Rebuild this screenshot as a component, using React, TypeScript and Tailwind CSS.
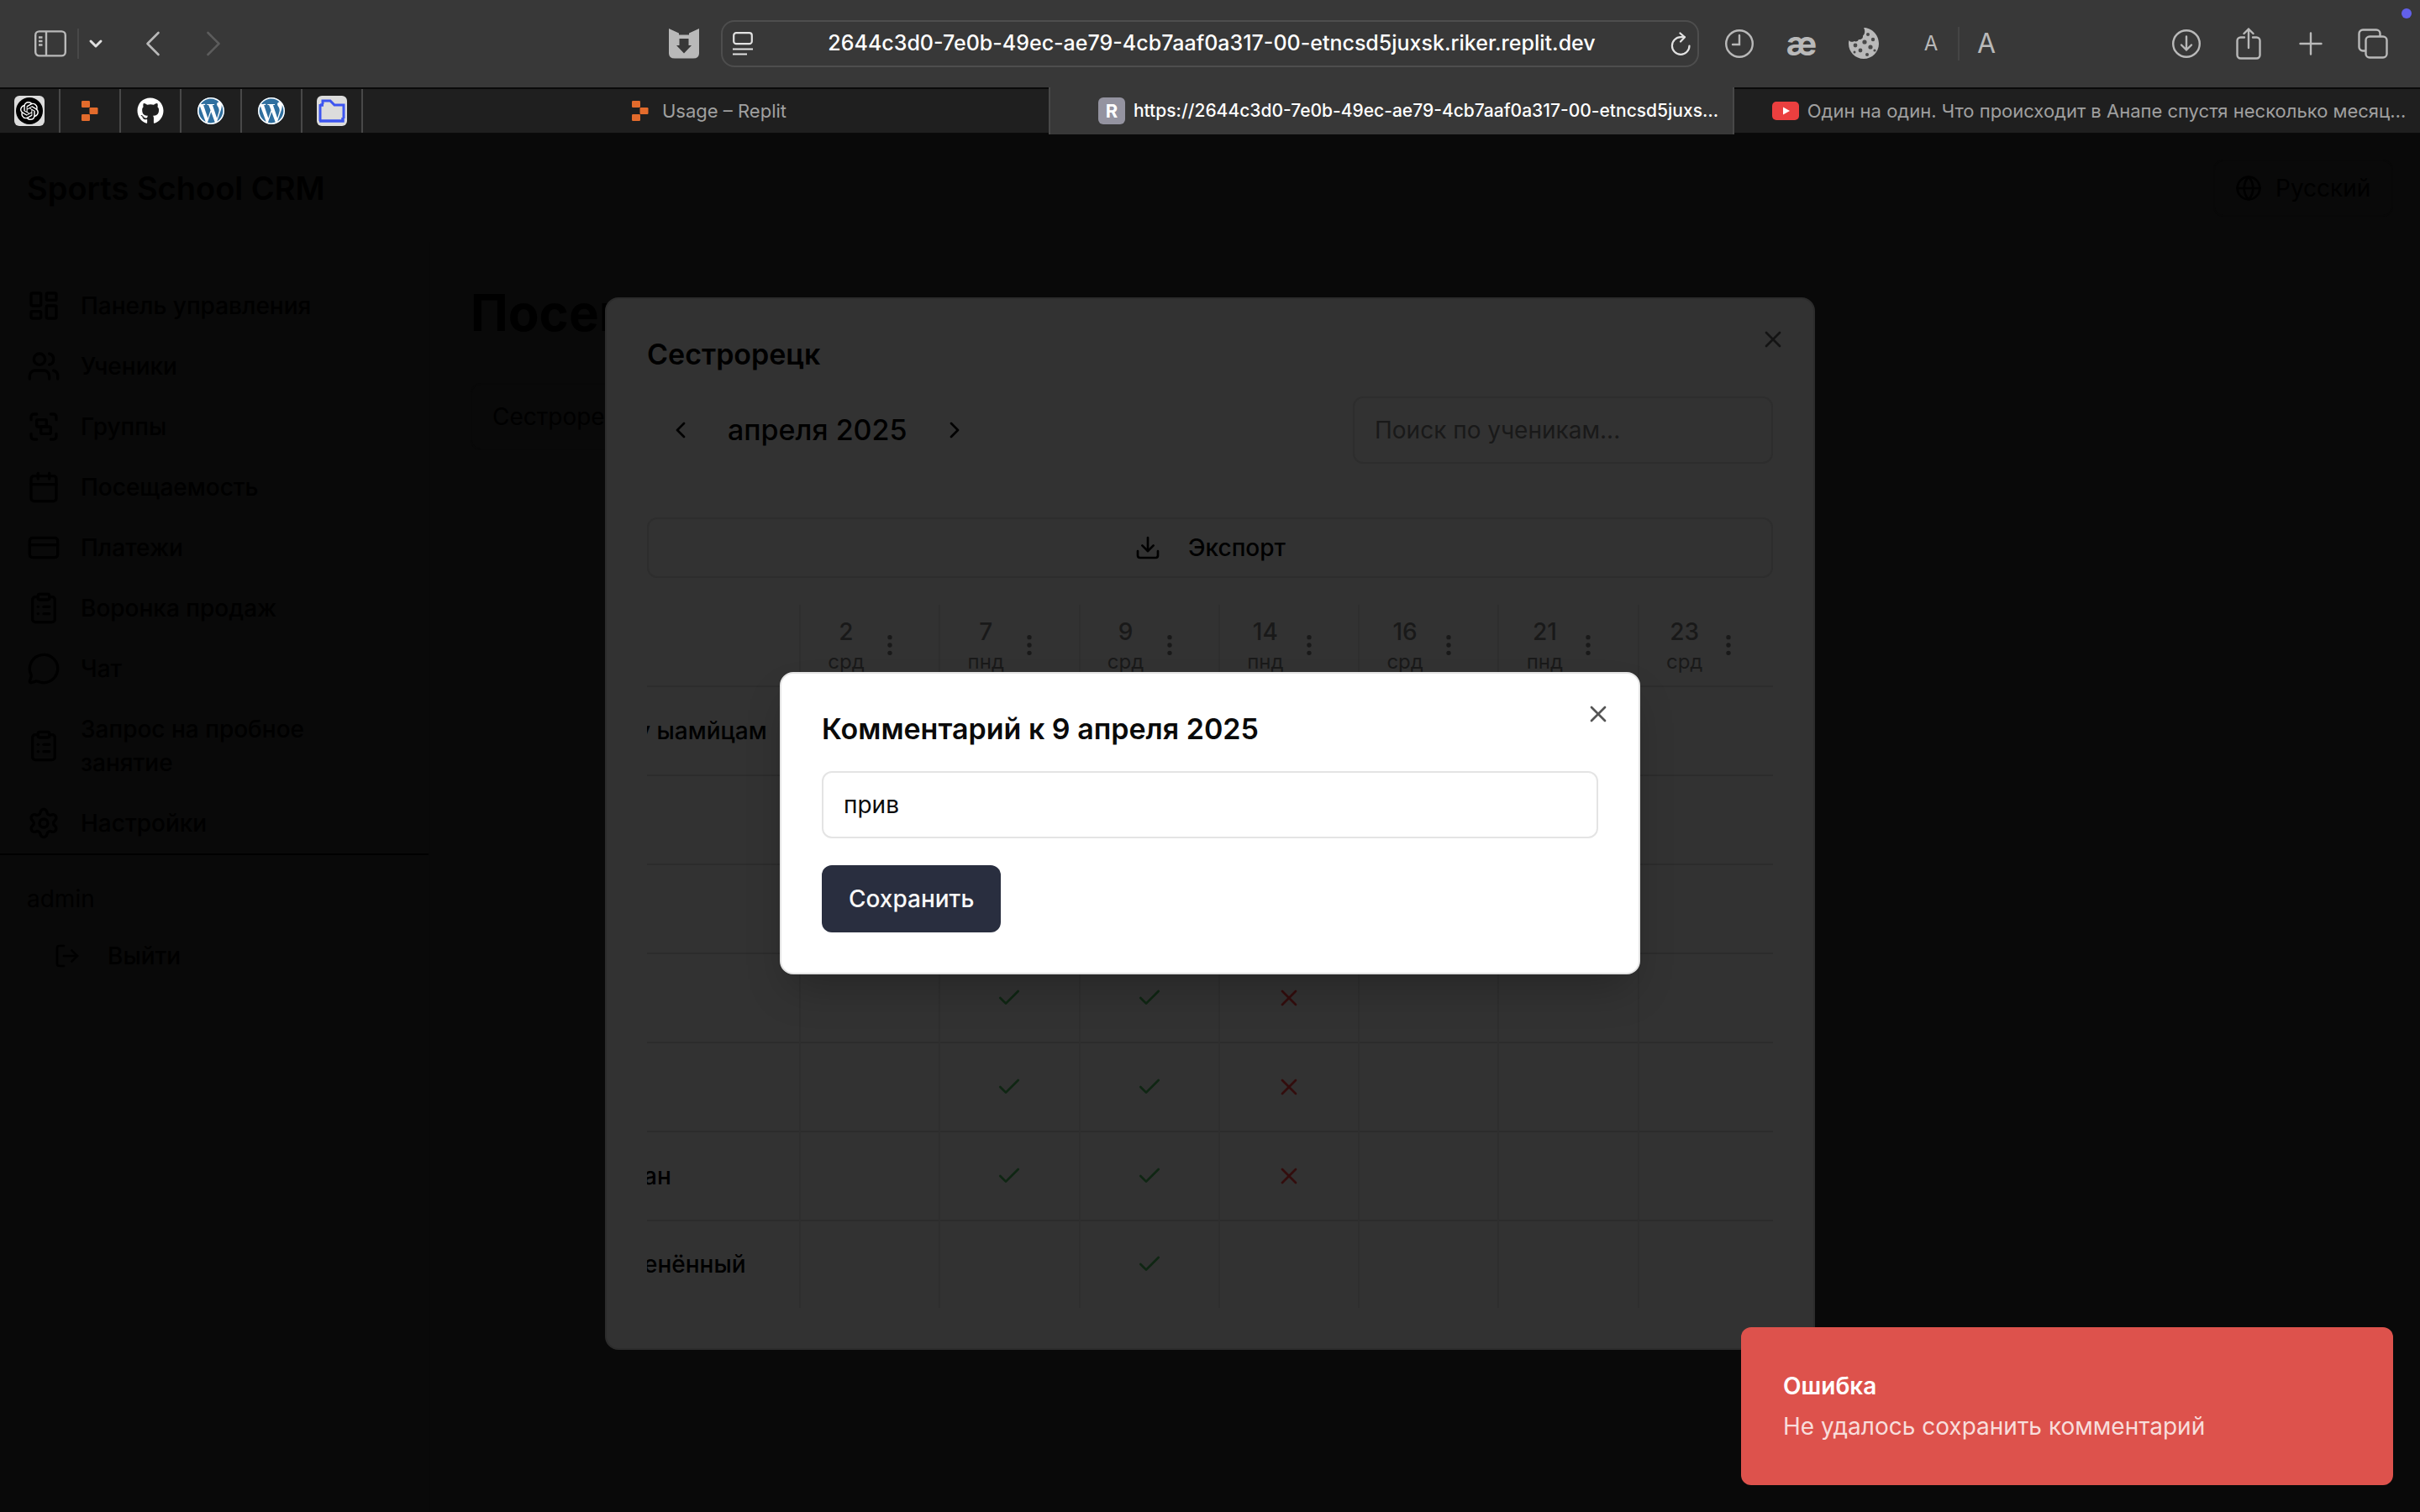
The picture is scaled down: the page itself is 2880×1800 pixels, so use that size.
import type { ReactNode } from "react";
import {
  Calendar,
  Check,
  ChevronDown,
  ChevronLeft,
  ChevronRight,
  ClipboardList,
  CreditCard,
  Download,
  EllipsisVertical,
  Globe,
  Group,
  LayoutDashboard,
  LogOut,
  MessageCircle,
  Settings,
  Users,
  X,
} from "lucide-react";
import { FaGithub } from "react-icons/fa";
import { SiOpenai, SiWordpress } from "react-icons/si";

function ReplitIcon() {
  return (
    <svg viewBox="0 0 20 24" className="h-6 w-5 shrink-0" fill="#e36b2c">
      <rect x="0" y="0" width="10" height="8" rx="1.2" />
      <rect x="9.5" y="8" width="10" height="8" rx="1.2" />
      <rect x="0" y="16" width="10" height="8" rx="1.2" />
    </svg>
  );
}

function SidebarIcon() {
  return (
    <svg viewBox="0 0 38 32" className="h-8 w-[38px]" fill="none" stroke="#b9b9b9" strokeWidth="2.4">
      <rect x="1.2" y="1.4" width="35.6" height="29" rx="4.5" />
      <path d="M14 1.4v29M5 8.5h4.5M5 13h4.5M5 17.5h4.5" />
    </svg>
  );
}

function ShieldIcon() {
  return (
    <svg viewBox="0 0 36 36" className="h-9 w-9">
      <path
        d="M0 0l12 5.5v2h12v-2L36 0v29.500q0 6-7 6H7q-7 0-7-6z"
        fill="#b9b9b9"
      />
      <path d="M12.500 12h11v8h3.500l-9 9.500-9-9.500h3.500z" fill="#383838" />
      <path d="M12 5h12v1.500h-12z" fill="#383838" />
    </svg>
  );
}

function ReaderIcon() {
  return (
    <svg viewBox="0 0 24 28" className="h-7 w-6" fill="none" stroke="#e2e2e2" strokeWidth="2.200">
      <rect x="1.200" y="1.200" width="21.600" height="13" rx="3" />
      <path d="M0 20.500h24M0 26.500h17" />
    </svg>
  );
}

function ReloadIcon() {
  return (
    <svg viewBox="0 0 24 28" className="h-7 w-6" fill="none" stroke="#e2e2e2" strokeWidth="2.200" strokeLinecap="round" strokeLinejoin="round">
      <path d="M22.500 16.500a10.300 10.300 0 1 1-10.300-10.300h4.500" />
      <path d="M11.500 1.500l5.500 4.800-5 5.200" />
    </svg>
  );
}

function ClockIcon() {
  return (
    <svg viewBox="0 0 36 36" className="h-9 w-9" fill="none" stroke="#b9b9b9" strokeWidth="2.400" strokeLinecap="round">
      <circle cx="18" cy="18" r="15.800" />
      <path d="M18 8v11h-8" />
    </svg>
  );
}

function CookieIcon() {
  return (
    <svg viewBox="0 0 38 40" className="h-10 w-[38px]">
      <path
        d="M19 1c8 0 18 7 18 19 0 10-8 18-18 18S1 30 1 20c0-1 .2-3 .5-4 1.500 2 4 2.500 6 1 2 1 4.500.5 5.500-2 3 .5 5.500-1.500 5-4.500 2.500-2 3-6 1-9.500z"
        fill="#b9b9b9"
      />
      <g fill="#4a4a4a">
        <circle cx="24" cy="9" r="2" />
        <circle cx="30" cy="15" r="2.200" />
        <circle cx="20" cy="18" r="2.600" />
        <circle cx="9" cy="22" r="2.400" />
        <circle cx="27" cy="24" r="2.600" />
        <circle cx="15" cy="28" r="2.400" />
        <circle cx="23" cy="33" r="2" />
        <circle cx="32" cy="28" r="1.600" />
        <circle cx="8" cy="30" r="1.500" />
      </g>
    </svg>
  );
}

function DownloadsIcon() {
  return (
    <svg viewBox="0 0 36 36" className="h-9 w-9" fill="none" stroke="#b9b9b9" strokeWidth="2.400" strokeLinecap="round" strokeLinejoin="round">
      <circle cx="18" cy="18" r="15.800" />
      <path d="M18 9.500v16M12 19.500l6 6 6-6" />
    </svg>
  );
}

function ShareIcon() {
  return (
    <svg viewBox="0 0 32 38" className="h-[38px] w-8" fill="none" stroke="#b9b9b9" strokeWidth="2.400" strokeLinecap="round" strokeLinejoin="round">
      <path d="M11 11.500H6.500a4 4 0 0 0-4 4v17a4 4 0 0 0 4 4h19a4 4 0 0 0 4-4v-17a4 4 0 0 0-4-4H21" />
      <path d="M16 24V1.500M10.500 7L16 1.500 21.500 7" />
    </svg>
  );
}

function PlusIcon() {
  return (
    <svg viewBox="0 0 28 28" className="h-7 w-7" fill="none" stroke="#b9b9b9" strokeWidth="2.400" strokeLinecap="round">
      <path d="M14 1.500v25M1.500 14h25" />
    </svg>
  );
}

function TabsIcon() {
  return (
    <svg viewBox="0 0 36 36" className="h-9 w-9" fill="none" stroke="#b9b9b9" strokeWidth="2.400">
      <rect x="9.500" y="9.500" width="25" height="25" rx="4.500" />
      <path d="M9.500 26.500H6a4.500 4.500 0 0 1-4.500-4.500V6A4.500 4.500 0 0 1 6 1.500h16A4.500 4.500 0 0 1 26.500 6v3.500" />
    </svg>
  );
}

function FolderIcon() {
  return (
    <span className="flex size-9 items-center justify-center rounded-md bg-[#dcdcdc]">
      <svg viewBox="0 0 32 30" className="h-[30px] w-8" fill="none" stroke="#3d55f0" strokeWidth="3">
        <path d="M2 27V7M5 7V3h9l5 5h11v16" />
        <path d="M2 8h4M1 27h28v-4" strokeWidth="3.500" />
      </svg>
    </span>
  );
}

function YoutubeIcon() {
  return (
    <svg viewBox="0 0 32 22" className="h-[22px] w-8 shrink-0">
      <rect width="32" height="22" rx="5" fill="#eb3f3f" />
      <path d="M13 6.500l8 4.500-8 4.500z" fill="#fff" />
    </svg>
  );
}

function ToolButton({ label, children }: { label: string; children: ReactNode }) {
  return (
    <button type="button" aria-label={label} className="flex size-10 items-center justify-center">
      {children}
    </button>
  );
}

function Toolbar() {
  return (
    <header className="relative grid h-[104px] grid-cols-[minmax(0,1fr)_1164px_minmax(0,1fr)] items-center bg-[#383838]">
      <div className="flex items-center pl-10">
        <ToolButton label="Боковая панель">
          <SidebarIcon />
        </ToolButton>
        <span className="ml-3 h-9 w-0.5 bg-[#484848]" />
        <ToolButton label="Группы вкладок">
          <ChevronDown className="size-6 text-[#e0e0e0]" strokeWidth={3} />
        </ToolButton>
        <span className="flex items-center gap-8 pl-7">
          <ToolButton label="Назад">
            <svg viewBox="0 0 18 30" className="h-[30px] w-[18px]" fill="none" stroke="#b9b9b9" strokeWidth="2.600" strokeLinecap="round" strokeLinejoin="round">
              <path d="M15.500 2L2.500 15l13 13" />
            </svg>
          </ToolButton>
          <ToolButton label="Вперёд">
            <svg viewBox="0 0 18 30" className="h-[30px] w-[18px]" fill="none" stroke="#5c5c5c" strokeWidth="2.600" strokeLinecap="round" strokeLinejoin="round">
              <path d="M2.500 2l13 13-13 13" />
            </svg>
          </ToolButton>
        </span>
        <span className="ml-auto pr-6">
          <ToolButton label="Защита">
            <ShieldIcon />
          </ToolButton>
        </span>
      </div>
      <div className="flex h-14 items-center rounded-2xl border-2 border-[#4e4e4e] pr-2 pl-3">
        <ReaderIcon />
        <input
          aria-label="Адрес"
          readOnly
          defaultValue="2644c3d0-7e0b-49ec-ae79-4cb7aaf0a317-00-etncsd5juxsk.riker.replit.dev"
          className="min-w-0 flex-1 bg-transparent text-center text-[25px] font-medium text-white outline-none"
        />
        <ReloadIcon />
      </div>
      <div className="flex items-center justify-between pr-9 pl-7">
        <div className="flex items-center text-[#b9b9b9]">
          <ToolButton label="История">
            <ClockIcon />
          </ToolButton>
          <button type="button" className="ml-8 h-10 w-11 text-[40px] leading-9 font-bold">æ</button>
          <span className="ml-8">
            <ToolButton label="Файлы cookie">
              <CookieIcon />
            </ToolButton>
          </span>
          <button type="button" className="ml-10 h-10 w-10 text-[24px]">A</button>
          <span className="ml-3 h-10 w-0.5 bg-[#454545]" />
          <button type="button" className="ml-3 h-10 w-10 text-[32px] leading-10">A</button>
        </div>
        <div className="flex items-center gap-[34px]">
          <ToolButton label="Загрузки">
            <DownloadsIcon />
          </ToolButton>
          <ToolButton label="Поделиться">
            <ShareIcon />
          </ToolButton>
          <ToolButton label="Новая вкладка">
            <PlusIcon />
          </ToolButton>
          <ToolButton label="Обзор вкладок">
            <TabsIcon />
          </ToolButton>
        </div>
      </div>
      <span className="absolute top-2.5 right-2.5 size-3 rounded-full bg-[#6260ea]" />
    </header>
  );
}

const pinned: { label: string; icon: ReactNode }[] = [
  {
    label: "ChatGPT",
    icon: (
      <span className="flex size-9 items-center justify-center rounded-md bg-[#dcdcdc]">
        <span className="flex size-8 items-center justify-center rounded-full bg-black">
          <SiOpenai className="size-[22px] text-white" />
        </span>
      </span>
    ),
  },
  { label: "Replit", icon: <ReplitIcon /> },
  { label: "GitHub", icon: <FaGithub className="size-8 text-white" /> },
  { label: "WordPress", icon: <Wordpress /> },
  { label: "WordPress 2", icon: <Wordpress /> },
  { label: "Файлы", icon: <FolderIcon /> },
];

function Wordpress() {
  return (
    <span className="flex size-8 items-center justify-center rounded-full bg-[#2f6f9f]">
      <SiWordpress className="size-8 text-white" />
    </span>
  );
}

function TabStrip() {
  return (
    <nav aria-label="Вкладки" className="grid h-14 grid-cols-[auto_repeat(3,minmax(0,1fr))] bg-black text-[22px]">
      <div className="flex border-y-2 border-[#0a0a0a] bg-[#1f1f1f]">
        {pinned.map((p) => (
          <a key={p.label} href="#" aria-label={p.label} className="flex w-18 items-center justify-center border-r-2 border-[#484848]">
            {p.icon}
          </a>
        ))}
      </div>
      <a href="#" className="flex items-center justify-center gap-4 border-y-2 border-[#0a0a0a] bg-[#1f1f1f] pl-2 text-[#a0a0a0]">
        <ReplitIcon />
        Usage – Replit
      </a>
      <a href="#" aria-current="page" className="flex items-center justify-center gap-2.5 border-x-2 border-[#484848] bg-[#383838] pl-10 text-[21px] font-medium whitespace-nowrap text-white">
        <span className="flex size-8 shrink-0 items-center justify-center rounded-md bg-[#9493a0] text-[22px] font-bold">R</span>
        https://2644c3d0-7e0b-49ec-ae79-4cb7aaf0a317-00-etncsd5juxs…
      </a>
      <a href="#" className="flex items-center justify-center gap-2.5 border-y-2 border-[#0a0a0a] bg-[#1f1f1f] pl-7 whitespace-nowrap text-[#a0a0a0]">
        <YoutubeIcon />
        Один на один. Что происходит в Анапе спустя несколько месяц…
      </a>
    </nav>
  );
}

const menu = [
  { icon: LayoutDashboard, label: "Панель управления" },
  { icon: Users, label: "Ученики" },
  { icon: Group, label: "Группы" },
  { icon: Calendar, label: "Посещаемость" },
  { icon: CreditCard, label: "Платежи" },
  { icon: ClipboardList, label: "Воронка продаж" },
  { icon: MessageCircle, label: "Чат" },
  { icon: ClipboardList, label: "Запрос на пробное занятие" },
  { icon: Settings, label: "Настройки" },
];

function Page() {
  return (
    <div className="flex flex-1 flex-col text-[28px] leading-10 text-black">
      <div className="flex h-32 items-center justify-between px-8">
        <h1 className="text-[38px] font-semibold">Sports School CRM</h1>
        <label className="flex h-[68px] items-center gap-4 rounded-xl border-2 border-[#080808] px-6">
          <Globe className="size-8" />
          <select aria-label="Язык" className="appearance-none bg-transparent outline-none">
            <option>Русский</option>
          </select>
        </label>
      </div>
      <div className="flex flex-1">
        <aside className="w-128 border-r-2 border-[#080808] pt-10">
          <nav className="font-medium">
            {menu.map(({ icon: Icon, label }) => (
              <a key={label} href="#" className="flex items-center gap-6 px-8 py-4">
                <Icon className="size-10 shrink-0" />
                <span className="max-w-[320px]">{label}</span>
              </a>
            ))}
          </nav>
          <div className="border-t-2 border-black px-8 pt-8">
            <p>admin</p>
            <button type="button" className="mt-3 flex h-18 items-center gap-8 px-8 font-medium">
              <LogOut className="size-8" />
              Выйти
            </button>
          </div>
        </aside>
        <main className="flex-1 p-12">
          <h2 className="text-[60px] leading-[72px] font-bold">Посещаемость</h2>
          <button type="button" className="mt-12 flex h-20 w-96 items-center rounded-xl border-2 border-[#080808] px-6">
            Сестрорецк
          </button>
        </main>
      </div>
    </div>
  );
}

const days = [
  [2, "срд"],
  [7, "пнд"],
  [9, "срд"],
  [14, "пнд"],
  [16, "срд"],
  [21, "пнд"],
  [23, "срд"],
] as const;

type Mark = "+" | "-" | "";
const students: { id: number; name: string; clip: string; marks: Mark[] }[] = [
  { id: 1, name: "у ыамйцам", clip: "-ml-3", marks: ["", "", "", "", "", "", ""] },
  { id: 2, name: "", clip: "", marks: ["", "", "", "", "", "", ""] },
  { id: 3, name: "", clip: "", marks: ["", "", "", "", "", "", ""] },
  { id: 4, name: "", clip: "", marks: ["", "+", "+", "-", "", "", ""] },
  { id: 5, name: "", clip: "", marks: ["", "+", "+", "-", "", "", ""] },
  { id: 6, name: "ан", clip: "-ml-1", marks: ["", "+", "+", "-", "", "", ""] },
  { id: 7, name: "енённый", clip: "-ml-1", marks: ["", "", "+", "", "", "", ""] },
];

function AttendanceDialog() {
  return (
    <section
      role="dialog"
      aria-labelledby="group-title"
      className="relative w-1/2 rounded-2xl border-2 border-[#2c2c2c] bg-[#323232] p-12 text-[28px] text-black"
    >
      <h2 id="group-title" className="text-[34px] leading-9 font-semibold">Сестрорецк</h2>
      <button type="button" aria-label="Закрыть" className="absolute top-8 right-8 text-[#141414]">
        <X className="size-8" />
      </button>
      <div className="mt-8 flex items-center justify-between">
        <div className="flex items-center gap-4">
          <button type="button" aria-label="Предыдущий месяц" className="flex size-20 items-center justify-center">
            <ChevronLeft className="size-8" />
          </button>
          <span className="text-[34px] font-medium">апреля 2025</span>
          <button type="button" aria-label="Следующий месяц" className="flex size-20 items-center justify-center">
            <ChevronRight className="size-8" />
          </button>
        </div>
        <input
          aria-label="Поиск по ученикам"
          placeholder="Поиск по ученикам..."
          className="h-20 w-[500px] rounded-xl border-2 border-[#2d2d2d] bg-transparent px-6 placeholder:text-[#191919]"
        />
      </div>
      <button type="button" className="mt-16 flex h-18 w-full items-center justify-center gap-8 rounded-xl border-2 border-[#2d2d2d] font-medium">
        <Download className="size-8" />
        Экспорт
      </button>
      <div className="mt-8 overflow-hidden">
        <table className="w-[calc(100%+6px)] table-fixed border-collapse">
          <thead>
            <tr className="h-[97px] border-b-2 border-[#2c2c2c] text-[#191919]">
              <th className="w-[182px]" aria-label="Ученик" />
              {days.map(([day, name]) => (
                <th key={day} className="border-l-2 border-[#2e2e2e] p-0 pl-[22px] text-left align-top font-medium">
                  <div className="flex items-center gap-1 pt-3">
                    <span className="w-16 text-center">
                      <span className="block leading-10">{day}</span>
                      <span className="block text-[24px] leading-8 font-normal">{name}</span>
                    </span>
                    <button type="button" aria-label="Действия">
                      <EllipsisVertical className="size-8" />
                    </button>
                  </div>
                </th>
              ))}
            </tr>
          </thead>
          <tbody>
            {students.map((s) => (
              <tr key={s.id} className="h-[106px] border-b-2 border-[#2c2c2c] last:h-[104px] last:border-b-0">
                <td className="overflow-hidden p-0 font-medium whitespace-nowrap">
                  <div className={s.clip}>{s.name}</div>
                </td>
                {s.marks.map((m, i) => (
                  <td key={i} className="border-l-2 border-[#2e2e2e] p-0">
                    {m === "+" && <Check className="mx-auto size-8 text-[#0f2613]" />}
                    {m === "-" && <X className="mx-auto size-8 text-[#330d0d]" />}
                  </td>
                ))}
              </tr>
            ))}
          </tbody>
        </table>
      </div>
    </section>
  );
}

function CommentDialog() {
  return (
    <section
      role="dialog"
      aria-labelledby="comment-title"
      className="relative w-5xl rounded-2xl border-2 border-[#e4e4e4] bg-white p-12 text-[28px] text-[#0a0a0a] shadow-2xl"
    >
      <h2 id="comment-title" className="text-[34px] leading-9 font-semibold">Комментарий к 9 апреля 2025</h2>
      <button type="button" aria-label="Закрыть" className="absolute top-8 right-8 text-[#555555]">
        <X className="size-8" />
      </button>
      <input
        aria-label="Комментарий"
        defaultValue="прив"
        className="mt-8 block h-20 w-full rounded-xl border-2 border-[#e4e4e4] px-6 outline-none"
      />
      <button type="button" className="mt-8 block h-20 rounded-xl bg-[#292e3f] px-8 font-medium text-[#f8f8f8]">
        Сохранить
      </button>
    </section>
  );
}

export default function App() {
  return (
    <div className="flex min-h-screen flex-col bg-[#090909] font-['Inter','Liberation_Sans',sans-serif]">
      <Toolbar />
      <TabStrip />
      <div className="relative flex flex-1 flex-col">
        <Page />
        <div className="absolute inset-0 flex items-center justify-center">
          <AttendanceDialog />
        </div>
        <div className="absolute inset-0 flex items-center justify-center">
          <CommentDialog />
        </div>
        <div role="alert" className="absolute right-8 bottom-8 w-[776px] rounded-xl bg-[#dd524c] p-[50px] text-[28px] leading-10 text-white">
          <p className="font-semibold">Ошибка</p>
          <p className="mt-2 text-[#f8dddb]">Не удалось сохранить комментарий</p>
        </div>
      </div>
    </div>
  );
}
